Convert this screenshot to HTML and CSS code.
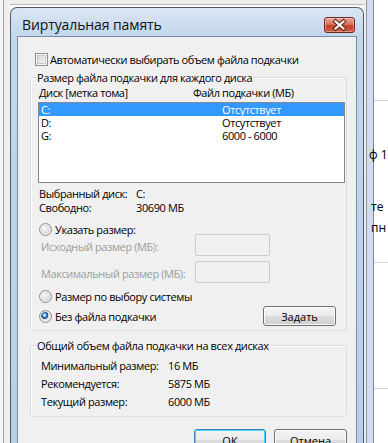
FILE: index.html
```html
<!DOCTYPE html>
<html lang="ru">
<head>
  <meta charset="UTF-8">
  <title>Виртуальная память</title>
  <link rel="stylesheet" href="styles.css">
</head>
<body>
  <div class="bg-left"></div>

  <div class="dialog">
    <div class="titlebar">
      <span class="title">Виртуальная память</span>
      <button class="close-btn" aria-label="Закрыть">
        <svg width="31" height="16" viewBox="0 0 31 16">
          <path d="M11.5 4.5 L19.5 11.5 M19.5 4.5 L11.5 11.5" stroke="#5b2219" stroke-width="4.2" stroke-linecap="square" fill="none"/>
          <path d="M11.5 4.5 L19.5 11.5 M19.5 4.5 L11.5 11.5" stroke="#fff" stroke-width="2.2" stroke-linecap="square" fill="none"/>
        </svg>
      </button>
    </div>

    <div class="client">
      <label class="check-row">
        <span class="checkbox"></span>
        Автоматически выбирать объем файла подкачки
      </label>

      <fieldset class="group group-disks">
        <legend>Размер файла подкачки для каждого диска</legend>
        <div class="list-head">
          <span>Диск [метка тома]</span>
          <span>Файл подкачки (МБ)</span>
        </div>
        <div class="listbox">
          <div class="list-row selected"><span>C:</span><span>Отсутствует</span></div>
          <div class="list-row"><span>D:</span><span>Отсутствует</span></div>
          <div class="list-row"><span>G:</span><span>6000 - 6000</span></div>
        </div>

        <div class="info">
          <span>Выбранный диск:</span><span>C:</span>
          <span>Свободно:</span><span>30690 МБ</span>
        </div>

        <label class="radio-row first">
          <span class="radio"></span>
          Указать размер:
        </label>
        <div class="size-row first">
          <span class="size-label">Исходный размер (МБ):</span>
          <span class="textbox"></span>
        </div>
        <div class="size-row">
          <span class="size-label">Максимальный размер (МБ):</span>
          <span class="textbox"></span>
        </div>
        <label class="radio-row system">
          <span class="radio"></span>
          Размер по выбору системы
        </label>
        <div class="last-row">
          <label class="radio-row">
            <span class="radio checked"></span>
            Без файла подкачки
          </label>
          <button class="btn set-btn">Задать</button>
        </div>
      </fieldset>

      <fieldset class="group group-total">
        <legend>Общий объем файла подкачки на всех дисках</legend>
        <div class="totals">
          <span>Минимальный размер:</span><span>16 МБ</span>
          <span>Рекомендуется:</span><span>5875 МБ</span>
          <span>Текущий размер:</span><span>6000 МБ</span>
        </div>
      </fieldset>

      <div class="buttons">
        <button class="btn default-btn">ОК</button>
        <button class="btn">Отмена</button>
      </div>
    </div>
  </div>

  <div class="bg-right">
    <div class="bg-rule first"></div>
    <div class="bg-text t1">ф 1</div>
    <div class="bg-text t2">те</div>
    <div class="bg-text t3">пн</div>
    <div class="bg-rule second"></div>
    <div class="bg-rule third"></div>
  </div>
</body>
</html>
```

FILE: styles.css
```css
* {
  box-sizing: border-box;
}

body {
  margin: 0;
  width: 388px;
  height: 443px;
  overflow: hidden;
  display: flex;
  align-items: flex-start;
  font-family: "Open Sans", "Noto Sans", sans-serif;
  font-size: 11px;
  letter-spacing: -0.4px;
  color: #000;
  white-space: nowrap;
  background: linear-gradient(#ededed 0 4px, #b8b8b8 4px 5px, #fafafa 5px);
}

/* background window pieces */
.bg-left {
  width: 10px;
  align-self: stretch;
  background: linear-gradient(to right, #f5f5f5 0 3px, #a3a3a3 3px 4px, #efefef 4px);
}

.bg-right {
  flex: 1;
  align-self: stretch;
  overflow: hidden;
  padding-left: 10px;
  background: linear-gradient(to right, #ececec 0 2px, #8d98a5 2px 3px, #cfdeee 3px 9px, #7d8895 9px 10px, #fff 10px);
  font-size: 12px;
  line-height: 14px;
  letter-spacing: 0;
}

.bg-rule {
  height: 1px;
  background: #d4d4d4;
}

.bg-rule.first { margin-top: 100px; }
.bg-rule.second { margin-top: 27px; }
.bg-rule.third { margin-top: 125px; }

.bg-text { margin-left: -5px; }
.bg-text.t1 { margin-top: 47px; }
.bg-text.t2 { margin-top: 38px; margin-left: -3px; }
.bg-text.t3 { margin-top: 7px; margin-left: -3px; }

/* dialog frame */
.dialog {
  width: 354px;
  height: 436px;
  margin-top: 7px;
  display: flex;
  flex-direction: column;
  padding: 0 6px;
  border: 1px solid #4e5a68;
  border-bottom: none;
  border-radius: 7px 7px 0 0;
  background: linear-gradient(#dbe6f3, #c2d6ec 28px, #b9cfe8);
}

.titlebar {
  flex: none;
  height: 28px;
  display: flex;
  align-items: flex-start;
  justify-content: space-between;
  padding-top: 9px;
}

.title {
  margin-left: 5px;
  line-height: 16px;
  font-size: 14px;
  letter-spacing: -0.1px;
  color: #111;
}

.close-btn {
  width: 31px;
  height: 16px;
  margin-right: 2px;
  padding: 0;
  border: 1px solid #6b2b23;
  border-radius: 3px;
  background: linear-gradient(#eaa595, #d9765f 45%, #c1412a 55%, #cf5d3f);
  box-shadow: inset 0 0 0 1px rgba(255, 255, 255, 0.35);
  display: flex;
  align-items: center;
  justify-content: center;
}

.close-btn svg {
  display: block;
  margin: -1px;
}

.client {
  flex: 1;
  background: #f0f0f0;
  border: 1px solid #7b8da3;
  border-bottom: none;
  display: flex;
  flex-direction: column;
}

/* controls */
.check-row {
  height: 16px;
  margin: 14px 0 0 17px;
  display: flex;
  align-items: center;
  gap: 2px;
}

.checkbox {
  width: 13px;
  height: 13px;
  border: 1px solid #8f8f8f;
  background: linear-gradient(135deg, #d3d3d3, #f7f7f7);
  box-shadow: inset 0 0 0 1px #f4f4f4, inset 0 0 0 2px #c6c6c6;
}

.group {
  margin: 3px 9px 0 12px;
  padding: 0 1px 4px 7px;
  border: 1px solid #d5dfe5;
  border-radius: 3px;
  box-shadow: inset 1px 1px 0 #fff;
}

.group legend {
  margin-left: -2px;
  padding: 0 1px;
  line-height: 15px;
}

.list-head {
  display: grid;
  grid-template-columns: 154px 1fr;
  padding-left: 1px;
  line-height: 15px;
}

.listbox {
  height: 81px;
  margin-top: 2px;
  border: 1px solid #828790;
  background: #fff;
}

.list-row {
  display: grid;
  grid-template-columns: 181px 1fr;
  height: 13px;
  line-height: 13px;
  padding-left: 2px;
}

.list-row.selected {
  background: #3399ff;
  color: #fff;
}

.info {
  display: grid;
  grid-template-columns: 97px 1fr;
  margin-top: 4px;
  padding-left: 1px;
  line-height: 14px;
}

.radio-row {
  height: 14px;
  padding-left: 1px;
  display: flex;
  align-items: center;
  gap: 3px;
}

.radio-row.first { margin-top: 7px; }
.radio-row.system { margin-top: 6px; }

.radio {
  width: 13px;
  height: 13px;
  border-radius: 50%;
  border: 1px solid #8e8f8f;
  background: radial-gradient(circle at 40% 40%, #fafafa, #d2d2d2 70%);
  box-shadow: inset 0 0 0 1px #eee;
}

.radio.checked {
  background: radial-gradient(circle at 42% 38%, #c4e2fb 0 1px, #3b87cf 2px, #0f4a86 3.5px, #e9e9e9 4px, #d6d6d6 100%);
}

.size-row {
  display: flex;
  align-items: center;
  height: 22px;
  margin-top: 5px;
  padding-left: 3px;
  color: #9d9d9d;
}

.size-row.first { margin-top: -2px; }

.size-label {
  width: 154px;
  padding-top: 2px;
}

.textbox {
  width: 75px;
  height: 22px;
  border: 1px solid #c9cbcf;
  border-radius: 2px;
  background: #f0f0f0;
}

.last-row {
  display: flex;
  align-items: center;
  justify-content: space-between;
  height: 20px;
  margin-top: 3px;
}

.btn {
  height: 20px;
  padding: 0;
  font: inherit;
  color: #000;
  border: 1px solid #707070;
  border-radius: 3px;
  background: linear-gradient(#f3f3f3, #ebebeb 50%, #dddddd 50%, #cfcfcf);
  box-shadow: inset 0 0 0 1px rgba(255, 255, 255, 0.8);
}

.set-btn {
  width: 73px;
  margin-right: 9px;
}

.group-total {
  margin-top: 7px;
  padding-bottom: 6px;
}

.totals {
  display: grid;
  grid-template-columns: 127px 1fr;
  grid-auto-rows: 18px;
  align-items: center;
  padding: 3px 0 0 3px;
}

.buttons {
  display: flex;
  justify-content: flex-end;
  gap: 8px;
  margin: 12px 9px 0 0;
}

.buttons .btn {
  flex: none;
  height: 23px;
  width: 73px;
}

.buttons .default-btn {
  width: 72px;
  border-color: #3c7fb1;
  box-shadow: inset 0 0 0 1px #48d8fb;
}
```
